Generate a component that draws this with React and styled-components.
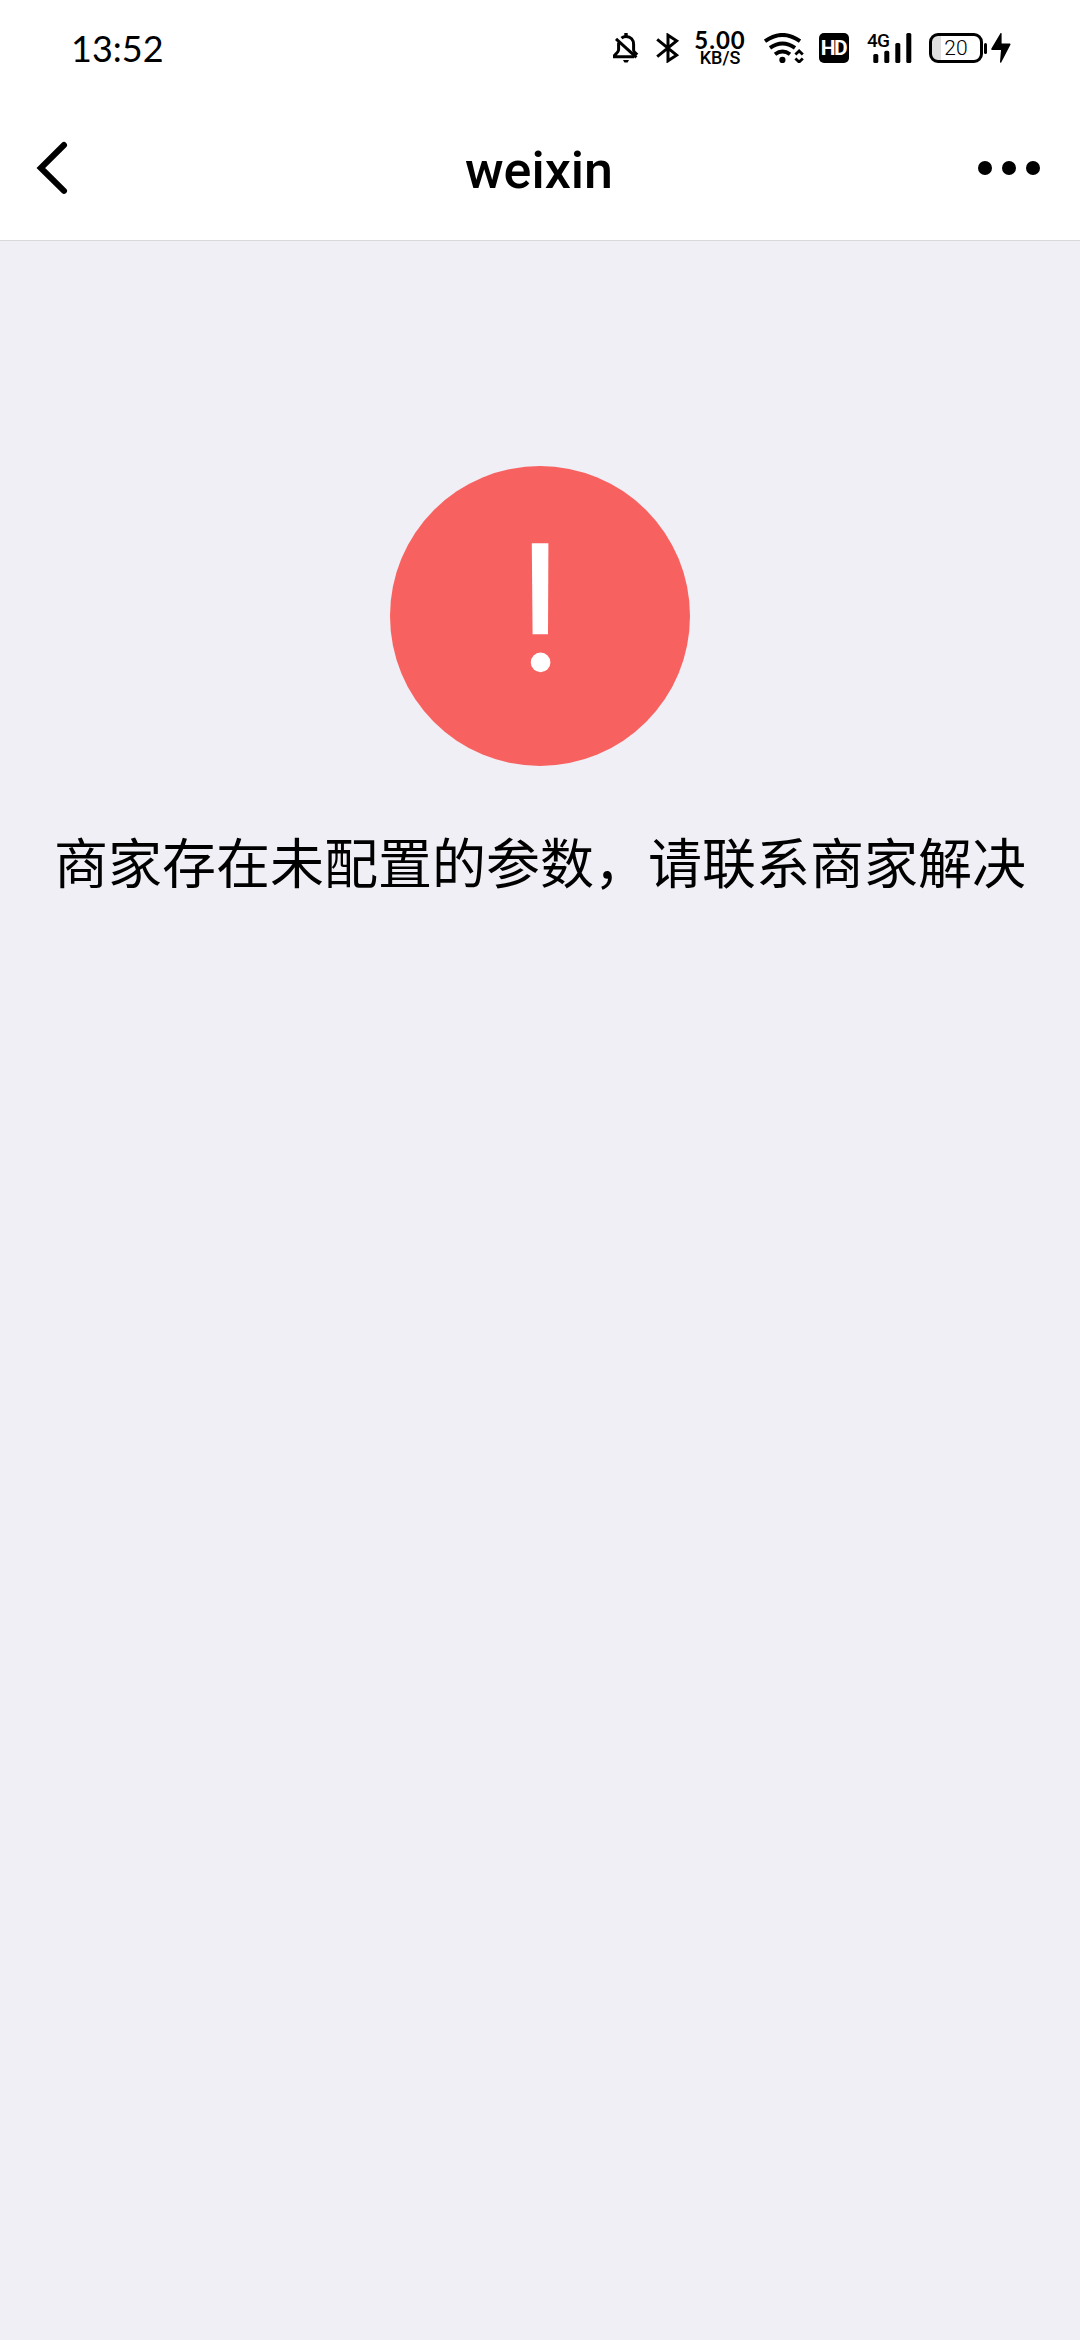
import React from "react";
import styled, { createGlobalStyle } from "styled-components";

const App = () => {
  return (
    <Screen>
      <GlobalStyle />
      <StatusBar>
        <Time>13:52</Time>
        <StatusIcons>
          <BellOffIcon />
          <BluetoothIcon />
          <Speed>
            <SpeedValue>5.00</SpeedValue>
            <SpeedUnit>KB/S</SpeedUnit>
          </Speed>
          <WifiIcon />
          <HdBadge>HD</HdBadge>
          <SignalIcon />
          <Battery>
            <BatteryBody>20</BatteryBody>
            <BatteryTip />
          </Battery>
          <BoltIcon />
        </StatusIcons>
      </StatusBar>
      <Header>
        <BackIcon />
        <Title>weixin</Title>
        <MoreButton>
          <Dot />
          <Dot />
          <Dot />
        </MoreButton>
      </Header>
      <Content>
        <WarnIcon />
        <Message>商家存在未配置的参数，请联系商家解决</Message>
      </Content>
    </Screen>
  );
};

const BellOffIcon = () => (
  <Icon $width={26} $left={0} viewBox="0 0 26 30">
    <g fill="none" stroke="#000" strokeWidth="3">
      <path d="M8.5 5.2C9.8 4 11.2 3.4 13 3.4c4.8 0 7.6 3.4 7.6 8v5.8c0 1.6 1.6 2.4 3.6 4.6" />
      <path d="M5.6 9.5v7.2c0 1.6-.8 2.6-4.2 5.8v1.2H21" />
      <path d="M3 5.8l20.4 18.6" />
    </g>
    <path d="M11.3 0h3.4v3.6h-3.4zM10 27h6l-1.4 2.6h-3.2z" />
  </Icon>
);

const BluetoothIcon = () => (
  <Icon $width={24} $left={17} viewBox="0 0 24 30">
    <path
      d="M1.2 6.4l19.4 15.8-8.6 5.6V2.2l8.6 5.6L1.2 23.6"
      fill="none"
      stroke="#000"
      strokeWidth="3"
    />
  </Icon>
);

const WifiIcon = () => (
  <Icon $width={40} $left={17} viewBox="0 0 40 30">
    <g fill="none" stroke="#000" strokeWidth="3.9">
      <path d="M1 8.2Q18.5-4.4 36 8.2" />
      <path d="M6 14.8q12.5-8.8 25 0" />
      <path d="M11 21.2q7.5-5.6 15 0" />
    </g>
    <circle cx="18.4" cy="26.9" r="3.1" />
    <path
      d="M31.4 21.6l3.7-3.6 3.7 3.6M31.4 25.4l3.7 3.6 3.7-3.6"
      fill="none"
      stroke="#000"
      strokeWidth="2.8"
    />
  </Icon>
);

const SignalIcon = () => (
  <Signal>
    <Icon $width={45} $left={0} viewBox="0 0 45 30">
      <rect x="6.3" y="21" width="5" height="9" rx="1.6" />
      <rect x="17.3" y="17.8" width="5" height="12.2" rx="1.6" />
      <rect x="28.3" y="10" width="5" height="20" rx="1.6" />
      <rect x="39.3" y="0" width="5" height="30" rx="1.6" />
    </Icon>
    <Network>4G</Network>
  </Signal>
);

const BoltIcon = () => (
  <Icon $width={20} $left={4} viewBox="0 0 20 30">
    <path d="M9.6 0L.4 15.6q-.6 1.4.8 1.4H10L9 29q.2 1.4 1.2.4L19.4 11.8q.4-1.2-.6-1.2H10.6V.6Q10.4-.6 9.6 0z" />
  </Icon>
);

const BackIcon = () => (
  <BackSvg viewBox="0 0 34 56">
    <path
      d="M28 5L4.8 28l23.2 22.8"
      fill="none"
      stroke="#000"
      strokeWidth="6"
      strokeLinecap="round"
    />
  </BackSvg>
);

const WarnIcon = () => (
  <WarnSvg viewBox="0 0 300 300">
    <circle cx="150" cy="150" r="150" fill="#f76260" />
    <path d="M141.8 77.2h16.6l-.4 91H142.6z" fill="#fff" />
    <circle cx="150.6" cy="196.4" r="9.8" fill="#fff" />
  </WarnSvg>
);

const GlobalStyle = createGlobalStyle`
  body {
    margin: 0;
    background-color: #f0eff5;
  }
`;

const Screen = styled.div`
  width: 1080px;
  min-height: 2340px;
  color: #000;
  background-color: #f0eff5;
  font-family: Roboto, "Noto Sans CJK SC", sans-serif;
`;

const StatusBar = styled.div`
  display: flex;
  justify-content: space-between;
  align-items: center;
  height: 96px;
  padding: 0 69px 0 71px;
  box-sizing: border-box;
  background-color: #fff;
`;

const Time = styled.div`
  font-family: Lato, sans-serif;
  font-size: 36px;
  line-height: 40px;
`;

const StatusIcons = styled.div`
  display: flex;
  align-items: center;
`;

const Icon = styled.svg`
  display: block;
  width: ${({ $width }) => $width}px;
  height: 30px;
  margin-left: ${({ $left }) => $left}px;
`;

const Speed = styled.div`
  display: flex;
  flex-direction: column;
  align-items: center;
  width: 54px;
  margin-left: 13px;
  font-family: Lato, sans-serif;
`;

const SpeedValue = styled.div`
  font-size: 24px;
  font-weight: 700;
  line-height: 19px;
  letter-spacing: 1px;
`;

const SpeedUnit = styled.div`
  font-family: Roboto, sans-serif;
  font-size: 18px;
  font-weight: 500;
  line-height: 18px;
`;

const HdBadge = styled.div`
  width: 30px;
  height: 30px;
  margin-left: 15px;
  border-radius: 5px;
  color: #fff;
  background-color: #000;
  font-size: 21px;
  font-weight: 700;
  line-height: 31px;
  letter-spacing: -1.5px;
  text-indent: -1px;
  text-align: center;
`;

const Signal = styled.div`
  position: relative;
  margin-left: 18px;
`;

const Network = styled.div`
  position: absolute;
  top: 0;
  left: 0;
  font-size: 19px;
  font-weight: 500;
  line-height: 16px;
  letter-spacing: -0.8px;
`;

const Battery = styled.div`
  display: flex;
  align-items: center;
  margin-left: 17px;
`;

const BatteryBody = styled.div`
  width: 54px;
  height: 30px;
  box-sizing: border-box;
  border: 3px solid #000;
  border-radius: 9px;
  background: linear-gradient(to right, #e0e0e0 9px, #fff 9px);
  font-size: 21px;
  font-weight: 300;
  line-height: 25px;
  text-align: center;
`;

const BatteryTip = styled.div`
  width: 3px;
  height: 11px;
  margin-left: 1px;
  border-radius: 2px;
  background-color: #000;
`;

const Header = styled.div`
  display: grid;
  grid-template-columns: 1fr auto 1fr;
  align-items: center;
  height: 145px;
  padding: 0 40px 0 36px;
  box-sizing: border-box;
  border-bottom: 1px solid #d9d9dc;
  background-color: #fff;
`;

const BackSvg = styled.svg`
  width: 34px;
  height: 56px;
`;

const Title = styled.div`
  padding: 5px 0 0 2px;
  font-size: 52px;
  font-weight: 500;
  line-height: 60px;
`;

const MoreButton = styled.div`
  display: flex;
  gap: 10px;
  justify-self: end;
`;

const Dot = styled.div`
  width: 14px;
  height: 14px;
  border-radius: 50%;
  background-color: #000;
`;

const Content = styled.div`
  display: flex;
  flex-direction: column;
  align-items: center;
  padding-top: 225px;
`;

const WarnSvg = styled.svg`
  width: 300px;
  height: 300px;
`;

const Message = styled.div`
  margin-top: 55px;
  font-family: "Noto Sans CJK SC", sans-serif;
  font-size: 54px;
  line-height: 80px;
  white-space: nowrap;
`;

export default App;
